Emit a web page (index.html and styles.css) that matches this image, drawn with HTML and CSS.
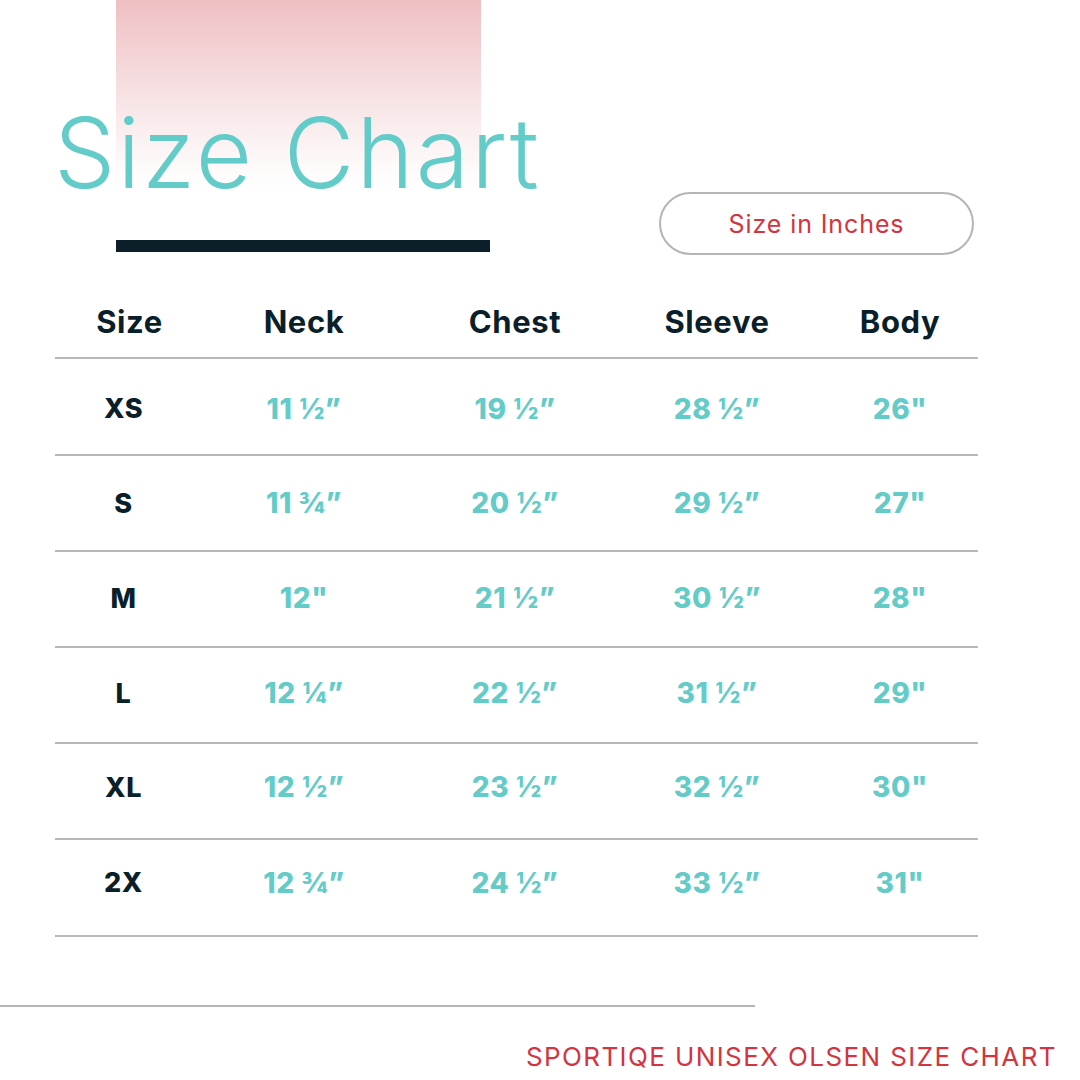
FILE: index.html
```html
<!DOCTYPE html>
<html lang="en">
<head>
<meta charset="utf-8">
<title>Size Chart</title>
<link rel="stylesheet" href="styles.css">
</head>
<body>
<div class="page">
  <header class="top">
    <div class="glow"></div>
    <h1 class="title">Size Chart</h1>
    <div class="subrow">
      <div class="bar"></div>
      <div class="pill">Size in Inches</div>
    </div>
  </header>

  <section class="table">
    <div class="row head">
      <div class="c c1">Size</div>
      <div class="c">Neck</div>
      <div class="c">Chest</div>
      <div class="c">Sleeve</div>
      <div class="c c5">Body</div>
    </div>
    <div class="row tall r1">
      <div class="c c1 sz">XS</div>
      <div class="c v">11 ½”</div>
      <div class="c v">19 ½”</div>
      <div class="c v">28 ½”</div>
      <div class="c c5 v">26"</div>
    </div>
    <div class="row r2">
      <div class="c c1 sz">S</div>
      <div class="c v">11 ¾”</div>
      <div class="c v">20 ½”</div>
      <div class="c v">29 ½”</div>
      <div class="c c5 v">27"</div>
    </div>
    <div class="row r3">
      <div class="c c1 sz">M</div>
      <div class="c v">12"</div>
      <div class="c v">21 ½”</div>
      <div class="c v">30 ½”</div>
      <div class="c c5 v">28"</div>
    </div>
    <div class="row r4">
      <div class="c c1 sz">L</div>
      <div class="c v">12 ¼”</div>
      <div class="c v">22 ½”</div>
      <div class="c v">31 ½”</div>
      <div class="c c5 v">29"</div>
    </div>
    <div class="row r5">
      <div class="c c1 sz">XL</div>
      <div class="c v">12 ½”</div>
      <div class="c v">23 ½”</div>
      <div class="c v">32 ½”</div>
      <div class="c c5 v">30"</div>
    </div>
    <div class="row tall r6">
      <div class="c c1 sz">2X</div>
      <div class="c v">12 ¾”</div>
      <div class="c v">24 ½”</div>
      <div class="c v">33 ½”</div>
      <div class="c c5 v">31"</div>
    </div>
  </section>

  <footer class="foot">
    <div class="rule"></div>
    <div class="caption">SPORTIQE UNISEX OLSEN SIZE CHART</div>
  </footer>
</div>
</body>
</html>
```

FILE: styles.css
```css
html, body {
  margin: 0;
  padding: 0;
  background: #ffffff;
}

.page {
  width: 1080px;
  height: 1080px;
  overflow: hidden;
  font-family: "Inter", "Noto Sans", "Liberation Sans", sans-serif;
  color: #0b1f2a;
}

.top {
  position: relative;
  height: 290px;
}

.glow {
  position: absolute;
  left: 116px;
  top: 0;
  width: 365px;
  height: 192px;
  background: linear-gradient(to bottom, #efbfc2 0%, #f6dfe1 45%, #fdf9f9 85%, #ffffff 100%);
}

.title {
  position: relative;
  margin: 0;
  padding: 104px 0 0 54px;
  height: 88px;
  font-size: 97px;
  line-height: 97px;
  font-weight: 300;
  letter-spacing: 2.2px;
  color: #63cbc8;
  white-space: nowrap;
}

.subrow {
  display: flex;
  align-items: flex-end;
  padding-left: 116px;
}

.bar {
  width: 374px;
  height: 12px;
  background: #0b1f2a;
  margin-bottom: 3px;
}

.pill {
  margin-left: 169px;
  width: 311px;
  height: 59px;
  border: 2px solid #b5b5b5;
  border-radius: 32px;
  display: flex;
  align-items: center;
  justify-content: center;
  font-size: 25px;
  color: #d3343e;
  letter-spacing: 0.9px;
}

.table {
  margin-left: 55px;
  width: 923px;
}

.row {
  display: grid;
  grid-template-columns: 145px 208px 214px 190px 166px;
  height: 94px;
  border-bottom: 2px solid #b8b8b8;
  align-items: center;
}

.row.tall {
  height: 95px;
}

.row.head {
  height: 67px;
  align-items: start;
}

.c {
  text-align: center;
  font-weight: 700;
  white-space: nowrap;
}

.c5 {
  padding-left: 10px;
}

.head .c {
  font-size: 31px;
  color: #0b1f2a;
  padding-top: 13px;
  letter-spacing: 0.6px;
}

.head .c1 {
  padding-left: 4px;
}

.sz {
  font-size: 27px;
  font-weight: 800;
  color: #0b1f2a;
  padding-right: 8px;
  letter-spacing: 0.5px;
}

.v {
  font-size: 28px;
  font-weight: 800;
  color: #63cbc8;
  letter-spacing: 0.6px;
}

.r1 .c { padding-top: 4px; }
.r2 .c { padding-top: 0; }
.r3 .c { padding-bottom: 2px; }
.r4 .c { padding-bottom: 4px; }
.r5 .c { padding-bottom: 8px; }
.r6 .c { padding-bottom: 10px; }

.foot {
  padding-top: 68px;
}

.rule {
  width: 755px;
  height: 2px;
  background: #b5b5b5;
}

.caption {
  margin-top: 34px;
  text-align: right;
  padding-right: 23px;
  font-size: 26px;
  color: #d3343e;
  letter-spacing: 1.4px;
  white-space: nowrap;
}
```
